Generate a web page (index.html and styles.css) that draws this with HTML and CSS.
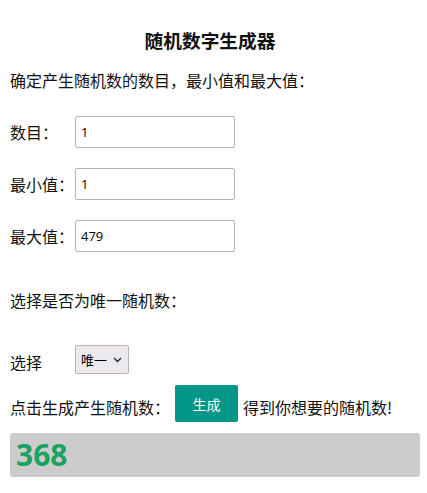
FILE: index.html
```html
<!DOCTYPE html>
<html lang="zh">
<head>
<meta charset="utf-8">
<title>随机数字生成器</title>
<link rel="stylesheet" href="styles.css">
</head>
<body>
<div class="page">
  <h3 class="title">随机数字生成器</h3>
  <p class="intro">确定产生随机数的数目，最小值和最大值：</p>
  <div class="fields">
    <div class="row"><span class="label">数目：</span><input class="num" type="text" value="1"></div>
    <div class="row"><span class="label">最小值：</span><input class="num" type="text" value="1"></div>
    <div class="row"><span class="label">最大值：</span><input class="num" type="text" value="479"></div>
  </div>
  <p class="intro2">选择是否为唯一随机数：</p>
  <div class="row sel-row"><span class="label lower">选择</span><span class="select-wrap"><select class="choice"><option>唯一</option><option>不唯一</option></select><svg class="chev" width="9" height="6" viewBox="0 0 9 6"><path d="M1 1l3.5 3.5L8 1" fill="none" stroke="#222" stroke-width="1.3"/></svg></span></div>
  <div class="row gen-row"><span class="gtext">点击生成产生随机数：</span><button class="btn">生成</button><span class="gtext">得到你想要的随机数!</span></div>
  <div class="result">368</div>
</div>
</body>
</html>
```
FILE: styles.css
```css
html, body {
  margin: 0;
  padding: 0;
  background: #fff;
}
body {
  font-family: "Noto Sans CJK SC", "Noto Sans", sans-serif;
  color: #111;
  font-size: 16px;
}
.page {
  padding: 0 7px 0 10px;
  width: 410px;
}
.title {
  margin: 28px 0 0;
  font-size: 18.7px;
  line-height: 24px;
  text-align: center;
  font-weight: bold;
  padding-right: 10px;
}
.intro {
  margin: 17px 0 0;
  line-height: 22px;
}
.fields {
  margin-top: 25px;
  display: flex;
  flex-direction: column;
  gap: 20px;
}
.row {
  display: flex;
  align-items: center;
}
.label {
  width: 65px;
  flex: none;
  line-height: 22px;
}
.lower {
  padding-top: 5px;
}
.num {
  box-sizing: border-box;
  width: 160px;
  height: 32px;
  border: 1px solid #c0b1a9;
  border-radius: 2px;
  background: #fff;
  padding: 0 5px;
  font-family: "Open Sans", "Noto Sans CJK SC", sans-serif;
  font-size: 13px;
  color: #000;
  outline: none;
}
.intro2 {
  margin: 37px 0 0;
  line-height: 22px;
}
.sel-row {
  margin-top: 34px;
}
.select-wrap {
  position: relative;
  display: inline-block;
  height: 29px;
}
.choice {
  -webkit-appearance: none;
  appearance: none;
  box-sizing: border-box;
  width: 54px;
  height: 29px;
  border: 1px solid #c0b1a9;
  border-radius: 2px;
  background-color: #ebe9ed;
  font-family: "Noto Sans CJK SC", sans-serif;
  font-size: 13px;
  color: #000;
  padding: 0 0 0 5px;
  outline: none;
}
.chev {
  position: absolute;
  right: 7px;
  top: 12px;
  pointer-events: none;
}
.gen-row {
  margin-top: 11px;
  gap: 5px;
}
.gtext {
  line-height: 22px;
  padding-top: 6px;
}
.btn {
  box-sizing: border-box;
  width: 63px;
  height: 37px;
  border: none;
  border-radius: 2px;
  background: #009688;
  color: #fff;
  font-family: "Noto Sans CJK SC", sans-serif;
  font-size: 14px;
  padding: 0;
}
.result {
  margin-top: 11px;
  box-sizing: border-box;
  height: 44px;
  background: #cccccc;
  border-radius: 3px;
  padding-left: 6px;
  font-family: "Open Sans", sans-serif;
  font-weight: bold;
  font-size: 30px;
  line-height: 44px;
  color: #1aa260;
}
```
